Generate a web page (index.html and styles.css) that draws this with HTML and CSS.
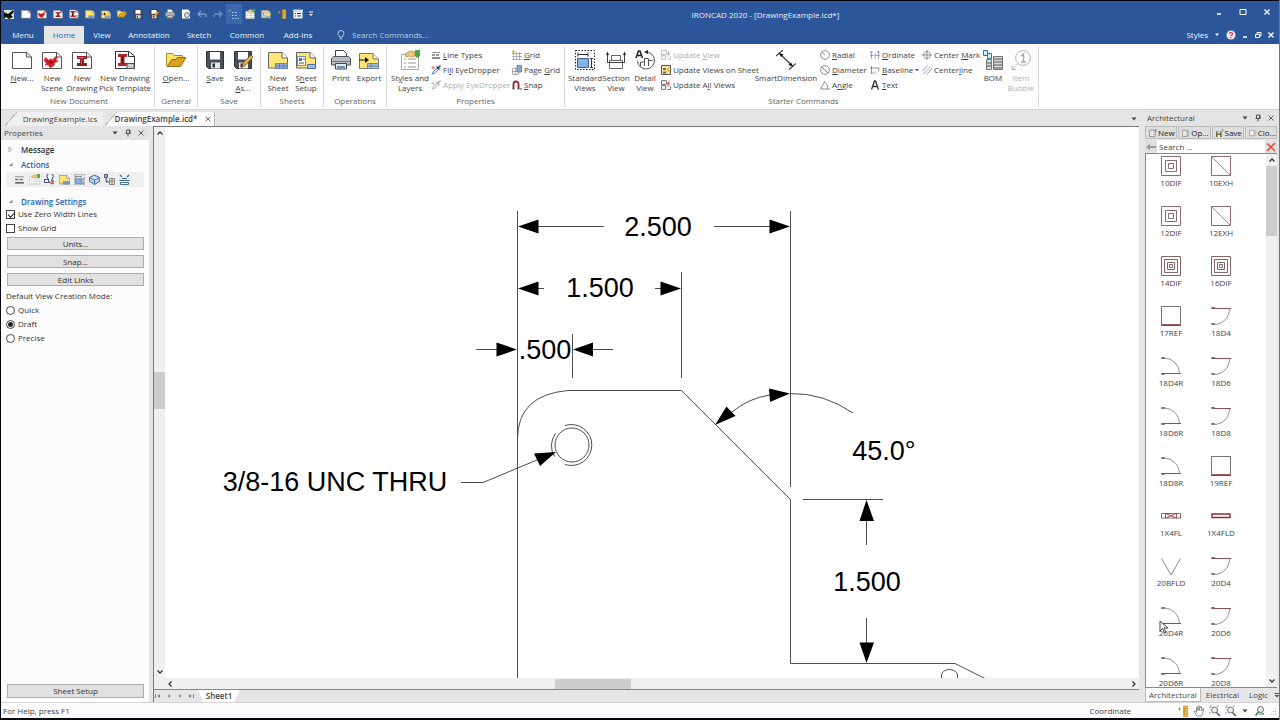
FILE: index.html
```html
<!DOCTYPE html>
<html lang="en">
<head>
<meta charset="utf-8">
<title>IRONCAD 2020 - [DrawingExample.icd*]</title>
<link rel="stylesheet" href="styles.css">
</head>
<body>
<svg class="defs" aria-hidden="true">
  <defs>
    <symbol id="page" viewBox="0 0 20 20"><path d="M.5 2.500H15l4.500 4.500v11.500H.5z" fill="#fff" stroke="#555"/><path d="M14.500 2.500V7h5" fill="none" stroke="#555"/></symbol>
    <symbol id="scene" viewBox="0 0 20 20"><use href="#page"/><path d="M3 7l4 3 2-2 1 2 4-4 2 1-2 3 3 1-4 2-1 3-4 2-2-3-3 1 1-3-2-2z" fill="#d41f26"/><path d="M7 11l5 1-4 2z" fill="#7b1015"/></symbol>
    <symbol id="draw" viewBox="0 0 20 20"><use href="#page"/><path d="M5 6h10v3h-3v4h3v3H5v-3h3V9H5z" fill="#8f1d22"/><path d="M6 7h7v1H6zM9 8h1v6H9z" fill="#d8595c"/></symbol>
    <symbol id="drawpick" viewBox="0 0 20 20"><path d="M.5 1.500H14l5.500 4.500v12.500H.5z" fill="#fff" stroke="#333"/><path d="M13.500 1.500V6.500h6" fill="none" stroke="#333"/><path d="M3 4h9v3H9.500v6H12v3H3v-3h2.500V7H3z" fill="#b3262b"/><path d="M6.500 6h2v8h-2z" fill="#6f1418"/><path d="M12 13.500h7v5h-7z" fill="#c9ccd0" stroke="#555"/></symbol>
    <symbol id="folder" viewBox="0 0 20 20"><path d="M.5 15.500V3.500h6l2 2h8v4" fill="#ffe16b" stroke="#a58b23"/><path d="M1 16.500L6 9.500h4l1.500-2H20L14.500 16.500z" fill="#d9a520" stroke="#8c6a14"/></symbol>
    <symbol id="floppy" viewBox="0 0 20 20"><path d="M1.500 1.500h17v17h-15l-2-2z" fill="#4b4f57" stroke="#30343b"/><path d="M5 2h10v7.500H5z" fill="#fff"/><path d="M6 12.500h9v6H6z" fill="#e6e8ec"/><path d="M7.500 13.500h2.500v4H7.500z" fill="#30343b"/></symbol>
    <symbol id="saveas" viewBox="0 0 20 20"><use href="#floppy"/><path d="M9 17l1.200-4L18 5l2 2-8 8.500z" fill="#f2b84b" stroke="#7a5a1b"/></symbol>
    <symbol id="sheet" viewBox="0 0 20 20"><path d="M.5 2.500H14L19.500 8v10H.5z" fill="#ffe574" stroke="#666"/><path d="M14 2.500V8h5.500" fill="#fff" stroke="#666"/><path d="M7.500 13.500h12v5h-12zM7.500 16h12M11.500 13.500v5M15.500 13.500v5" fill="#8fabd4" stroke="#5b79a8" stroke-width=".8"/></symbol>
    <symbol id="setup" viewBox="0 0 20 20"><path d="M.5 2.500H14L19.500 8v10H.5z" fill="#ffe574" stroke="#666"/><path d="M14 2.500V8h5.500" fill="#fff" stroke="#666"/><path d="M1.500 6.500h8v9h-8z" fill="#fff" stroke="#6b89b5"/><path d="M3 8h3v3H3z" fill="#3b74bd"/><path d="M3 13h5M7 9h2" stroke="#555"/><path d="M11.500 14.500h8v4h-8z" fill="#9dbce4" stroke="#4a70aa"/></symbol>
    <symbol id="print" viewBox="0 0 20 20"><path d="M4.500 7.500V.5h8l3 3v4" fill="#fff" stroke="#444"/><path d="M2.500 6.500h15l2 2v6.500H.5V8.500z" fill="#b9bcc2" stroke="#50545b"/><path d="M1 11.500h18" stroke="#777"/><path d="M4.500 13.500h11v5.500h-11z" fill="#e4edf7" stroke="#444"/><path d="M6 16h8v2H6z" fill="#6b8fb8"/></symbol>
    <symbol id="export" viewBox="0 0 20 20"><path d="M.5 3.500H14L19.500 9v9.500H.5z" fill="#ffe574" stroke="#777"/><path d="M14 3.500V9h5.500" fill="#fff2aa" stroke="#777"/><path d="M8.500 13.500h11v5h-11zM12 13.500v5M8.500 16h11" fill="#a9bdd6" stroke="#6f85a5"/><path d="M0 9.500h6V7l4 3-4 3v-2.500H0z" fill="#111"/></symbol>
    <symbol id="styles" viewBox="0 0 20 20"><path d="M1.500 4.500h17v15h-17z" fill="#fff" stroke="#aaa"/><path d="M4 9h2M8 9h8M4 13h2M8 13h8M4 17h2M8 17h8" stroke="#8c97a5"/><path d="M5 4l5-3 5 1v4l-4 1-2-1-3 1z" fill="#f0c877" stroke="#a7803a" stroke-width=".7"/><path d="M15 0h5v6l-3 2-2-2z" fill="#48a94b"/></symbol>
    <symbol id="lines" viewBox="0 0 10 10"><path d="M1 2.500h8" stroke="#999"/><path d="M1 5h8" stroke="#777" stroke-width="1.500" stroke-dasharray="3 1"/><path d="M1 8h8" stroke="#666" stroke-width="1.500"/></symbol>
    <symbol id="dropper" viewBox="0 0 10 10"><path d="M1 9l1-2 4-4 1.500 1.500-4 4z" fill="#dfeaf7" stroke="#3e6fae" stroke-width=".8"/><path d="M5 2l1-1 1 1 2-2 1 1-2 2 1 1-1 1z" fill="#27466f"/><path d="M0 2l3-1 1 2-2 2z" fill="#e28c77"/></symbol>
    <symbol id="droppergray" viewBox="0 0 10 10"><path d="M1 9l1-2 4-4 1.500 1.500-4 4z" fill="#eee" stroke="#aaa" stroke-width=".8"/><path d="M5 2l1-1 1 1 2-2 1 1-2 2 1 1-1 1zM0 3l3-1v3z" fill="#b5b5b5"/></symbol>
    <symbol id="grid" viewBox="0 0 10 10"><path d="M1.500 2v8M4.500 2v8M7.500 2v8M0 3.500h10M0 6.500h10M0 9.500h10" stroke="#a0a0a0" stroke-width=".8" fill="none"/><path d="M0 1l1.500-1L3 1.500 2 3 .5 3z" fill="#e2bb3b"/></symbol>
    <symbol id="pagegrid" viewBox="0 0 10 10"><path d="M.5 3.500h6v6h-6zM3.500 3v7M0 6.500h7" stroke="#999" stroke-width=".8" fill="none"/><path d="M5 .5h4.500v6.500H5z" fill="#8baad4" stroke="#53719d" stroke-width=".8"/></symbol>
    <symbol id="snap" viewBox="0 0 10 10"><path d="M1.500 8.500V4a2.500 2.500 0 0 1 5 0v4.500" fill="none" stroke="#8c2a33" stroke-width="1.800"/><path d="M.5 8h2v1.500h-2zM5.500 8h2v1.500h-2z" fill="#555"/><circle cx="9" cy="9" r=".8" fill="#333"/></symbol>
    <symbol id="stdview" viewBox="0 0 20 20"><path d="M.5.5h19v19H.5z" fill="none" stroke="#222" stroke-dasharray="1.500 1.500"/><path d="M2.500 8.500h11v9h-11z" fill="#86b1ea" stroke="#3d5f92"/><path d="M3 4.500h10M3 2.500v4M13 2.500v4M16.500 8.500v9M15 8.500h3M15 17.500h3" stroke="#333" fill="none"/></symbol>
    <symbol id="section" viewBox="0 0 20 20"><path d="M1.500 13V4.500M18.500 13V4.500M1.500 12.500h17" stroke="#444" fill="none"/><path d="M0 5l1.500-3.500L3 5zM17 5l1.500-3.500L20 5z" fill="#222"/><path d="M5.500 5.500h9v5h-9zM3.500 10.500h13v8h-13z" fill="#fff" stroke="#666"/><path d="M1.500 12.500h17" stroke="#444"/></symbol>
    <symbol id="detail" viewBox="0 0 20 20"><path d="M1 8L3.500 1H5L7.500 8M2.500 5.500h4" stroke="#222" stroke-width="1.500" fill="none"/><path d="M10.500 2a8.500 8.500 0 1 1-8 9" fill="none" stroke="#555"/><path d="M9 2l4-2v4z" fill="#222"/><path d="M5.500 16v-4h4v4M9.500 16V8.500h4V16M13.500 10.500h4" fill="none" stroke="#555"/></symbol>
    <symbol id="update" viewBox="0 0 10 10"><path d="M.5.5h5v4h-5zM.5 5.500h4v4h-4zM6 9.500h3.500V6" fill="#eee" stroke="#666" stroke-width=".8"/><path d="M9 0L5.500 4h2L5 8l4.500-4.500h-2z" fill="#d3392f"/></symbol>
    <symbol id="updategray" viewBox="0 0 10 10"><path d="M.5.5h5v4h-5zM.5 5.500h4v4h-4zM6 9.500h3.500V6" fill="#f5f5f5" stroke="#bbb" stroke-width=".8"/><path d="M9 0L5.500 4h2L5 8l4.500-4.500h-2z" fill="#aaa"/></symbol>
    <symbol id="updatesheet" viewBox="0 0 10 10"><path d="M.5.500h9v9h-9z" fill="#ffe89c" stroke="#555"/><path d="M2 3h3v2H2zM2 6.500h3v2H2z" fill="#666"/><path d="M9 1L5.500 5h2L5 9l4-4h-2z" fill="#c98500"/></symbol>
    <symbol id="smartdim" viewBox="0 0 20 20"><path d="M0 6L7 0M13 19.500L20 13.500M3.500 3.500l13 12.500" stroke="#444" stroke-width="1.200" fill="none"/><path d="M3 3l4.500 1.500L5 7zM17 16.500l-4.500-1.500 2.500-2.500z" fill="#111"/></symbol>
    <symbol id="radial" viewBox="0 0 10 10"><circle cx="5" cy="5" r="4.400" fill="none" stroke="#777" stroke-width=".8"/><path d="M5 5L1.500 2" stroke="#777" stroke-width=".8"/></symbol>
    <symbol id="diameter" viewBox="0 0 10 10"><circle cx="5" cy="5" r="4.400" fill="none" stroke="#777" stroke-width=".8"/><path d="M8 8L1.500 2" stroke="#555" stroke-width=".8"/></symbol>
    <symbol id="angle" viewBox="0 0 10 10"><path d="M10 9H.5L5 1M4.500 2.500Q8 4 8 9" fill="none" stroke="#777" stroke-width=".8"/></symbol>
    <symbol id="ordinate" viewBox="0 0 10 10"><path d="M1.500 1v8M0 5.500h4M5 3v6M8.500 1v8M5 5.500h5M0 2h3M7 2h3" fill="none" stroke="#7d93b5" stroke-width=".8"/></symbol>
    <symbol id="baseline" viewBox="0 0 10 10"><path d="M1.500 1v8M0 3h9.500M8.500 3v3M1.500 8h2M5 6.500v2" fill="none" stroke="#777" stroke-width=".8"/></symbol>
    <symbol id="texta" viewBox="0 0 10 10"><path d="M1.500 9.500L4.500 1h1L8.500 9.500M2.500 6.500h5" fill="none" stroke="#333" stroke-width="1.300"/></symbol>
    <symbol id="centermark" viewBox="0 0 10 10"><circle cx="5" cy="5" r="3.500" fill="none" stroke="#888" stroke-width=".8"/><path d="M5 0v10M0 5h10" stroke="#777" stroke-width=".8"/></symbol>
    <symbol id="centerline" viewBox="0 0 10 10"><path d="M.5 6L5.500.5M1 9.500l4-4M5 9.500L10 3" fill="none" stroke="#7f98b8" stroke-width=".9"/><path d="M5.500 5l3-3.500" stroke="#7f98b8" stroke-width=".9" stroke-dasharray="1.500 1"/></symbol>
    <symbol id="bom" viewBox="0 0 20 20"><path d="M.5.500h4v5h-4zM4.500 3.500h4v5h-4z" fill="#d3f0fa" stroke="#24798f"/><path d="M3.500 9.500h5v10h-5zM10.500 6.500h9v13h-9z" fill="#d5d9de" stroke="#777"/><path d="M11 9h8M11 12h8M11 15h8M11 18h8M4 13h4M4 16h4" stroke="#555"/></symbol>
    <symbol id="bubble" viewBox="0 0 20 20"><circle cx="12" cy="8" r="7.400" fill="none" stroke="#b4b4b4"/><path d="M10 6l2.500-2v8M10 12h5" fill="none" stroke="#aaa" stroke-width="1.400"/><path d="M7 13.500L1.500 19M1 15.500v4h4" fill="none" stroke="#b4b4b4"/></symbol>
    <symbol id="bulb" viewBox="0 0 10 10"><path d="M3.500 7C3.500 5.500 2 5 2 3.500a3 3 0 0 1 6 0C8 5 6.500 5.500 6.500 7zM3.700 8.800h2.600" fill="none" stroke="#c8d6ec" stroke-width=".9"/></symbol>
    <symbol id="down" viewBox="0 0 8 8"><path d="M1.500 2.500h5L4 5.500z" fill="#444"/></symbol>
    <symbol id="pin" viewBox="0 0 8 8"><path d="M2.500 1h3.500v3.500M1.500 4.500h5M4 4.500v3M2.500 1v3.500M5.500 1v3.500" fill="none" stroke="#444" stroke-width=".9"/></symbol>
    <symbol id="close" viewBox="0 0 8 8"><path d="M1.500 1.500l5 5M6.500 1.500l-5 5" stroke="#555" stroke-width=".9"/></symbol>
    <symbol id="chev" viewBox="0 0 8 8"><path d="M1.500 5.500L4 3l2.500 2.500" fill="none" stroke="#333" stroke-width="1.300"/></symbol>
    <symbol id="cube" viewBox="0 0 11 11"><path d="M.5 3.500l5-2.500 5 2.500v4l-5 3-5-3zM.5 3.500l5 2.500 5-2.500M5.500 6v4.500" fill="#b9d3f2" stroke="#3c659b" stroke-width=".9"/></symbol>
    <symbol id="stamp" viewBox="0 0 11 11"><path d="M4.500 5.500L3.500 4a3 3 0 1 1 5 0L7.500 7H10M.5 5.500h4v3h-4z" fill="#fff" stroke="#485b86" stroke-width="1.100"/><path d="M5 8l4 2M9 7v3" stroke="#c33" stroke-width="1.200"/></symbol>
    <symbol id="tree" viewBox="0 0 11 11"><path d="M.5.500h3v3h-3zM2 3.500V8h3" fill="#9fc0e6" stroke="#557"/><path d="M5.500 4.500h5v6h-5zM5.500 7h5M8 4.500v6" fill="#ddd" stroke="#777" stroke-width=".8"/></symbol>
    <symbol id="arrange" viewBox="0 0 11 11"><path d="M1 1l2 2M10 1L8 3" stroke="#356bb0" stroke-width="1.200"/><path d="M.5 6.500h10M1.500 8.500h8v2h-8zM3 4.500h5" fill="#fff" stroke="#456d96"/></symbol>
    <symbol id="ruler" viewBox="0 0 12 12"><path d="M6.500 1h4v10.500h-4z" fill="#f0b844" stroke="#c98b1c" stroke-width=".7"/><path d="M7 3.500h1.500M7 6h1.500M7 8.500h1.500" stroke="#7a5310" stroke-width=".7"/><path d="M1 4h3M2.500 2.500v3" stroke="#d28d24"/></symbol>
    <symbol id="hand" viewBox="0 0 12 12"><path d="M4 11L1 6.500l1-.5 1.500 1.500V2.500h1L5 5.500V1h1.200v4.500L7.500 1.500h1V6L10 3.500l.8.500L9.500 9 8.500 11z" fill="#fff" stroke="#777" stroke-width=".8"/></symbol>
    <symbol id="lens" viewBox="0 0 12 12"><path d="M1 1h2M1 1v2M10 1H8M1 9V7" stroke="#999" fill="none"/><circle cx="5.500" cy="5" r="3" fill="#e2effa" stroke="#777"/><path d="M7.500 7.500L11 11" stroke="#555" stroke-width="1.500"/></symbol>
    <symbol id="lensback" viewBox="0 0 12 12"><circle cx="7.500" cy="4.500" r="3" fill="#e2effa" stroke="#666"/><path d="M5.500 7L2.500 10.500" stroke="#3d8a46" stroke-width="1.800"/><path d="M6 9h5l-1.500-1.500" stroke="#3d8a46" fill="none"/></symbol>
    <symbol id="logo" viewBox="0 0 12 12"><path d="M1 2h10v9H1z" fill="#dfe6d8"/><path d="M1 4l4 2 5-4 1 2-3 3 2 2-4 2-3-2-2 2z" fill="#101510"/></symbol>
    <symbol id="undo" viewBox="0 0 10 10"><path d="M4 2L1 5l3 3M1 5h6q2 0 2 3" fill="none" stroke="#7f9dcd" stroke-width="1.300"/></symbol>
    <symbol id="redo" viewBox="0 0 10 10"><path d="M6 2l3 3-3 3M9 5H3Q1 5 1 8" fill="none" stroke="#6d8ec4" stroke-width="1.300"/></symbol>
    <symbol id="dots" viewBox="0 0 12 12"><path d="M4 4.500h1.500M7 4.500h1.500M4 7.500h1.500M7 7.500h1.500M4 10.500h1.500M7 10.500h1.500M10 10.500h1" stroke="#b9d2f3" stroke-width="1.200"/><path d="M1 3.500l2-2" stroke="#e6c84c"/></symbol>
    <symbol id="form" viewBox="0 0 10 10"><path d="M.5 1h9v8.500h-9z" fill="#f6f8fb"/><path d="M0 .5h10v2H0z" fill="#cfd9e8"/><path d="M2 4.500h1M4 4.500h4M2 7h1M4 7h4" stroke="#345"/></symbol>
    <symbol id="preview" viewBox="0 0 10 10"><path d="M1 .5h6l2 2v7H1z" fill="#fff"/><circle cx="6" cy="6" r="2.500" fill="#cfe0f4" stroke="#678"/></symbol>
    <symbol id="dif2" viewBox="0 0 20 20"><path d="M.5.500h19v19H.5zM4.500 4.500h11v11h-11zM7.500 7.500h5v5h-5z" fill="none" stroke="#8b6d6f"/></symbol>
    <symbol id="dif3" viewBox="0 0 20 20"><path d="M.5.500h19v19H.5zM3.500 3.500h13v13h-13zM6.500 6.500h7v7h-7zM8.500 8.500h3v3h-3z" fill="none" stroke="#876567"/></symbol>
    <symbol id="exh" viewBox="0 0 20 20"><path d="M.5.500h19v19H.5z" fill="none" stroke="#8b6d6f"/><path d="M.5.500l19 19" stroke="#777" stroke-width=".8"/></symbol>
    <symbol id="ref" viewBox="0 0 20 20"><path d="M.5.500h19v19H.5z" fill="none" stroke="#777"/><path d="M.5 19h19" stroke="#8a2f3a" stroke-width="1.600"/></symbol>
    <symbol id="door" viewBox="0 0 20 20"><path d="M.5 1.500h3v1h-3zM.5 17.500h3v1h-3z" fill="#fff" stroke="#844a50" stroke-width=".8"/><path d="M1 2.500h19" stroke="#8b5055"/><path d="M18.500 2.500A15.500 15.500 0 0 1 3 18.500" fill="none" stroke="#777" stroke-width=".8"/></symbol>
    <symbol id="doorr" viewBox="0 0 20 20"><path d="M.5 1.500h3v1h-3zM.5 17.500h3v1h-3z" fill="#fff" stroke="#844a50" stroke-width=".8"/><path d="M1 17.500h19" stroke="#8b5055"/><path d="M3 2A15.500 15.500 0 0 1 18.500 17.500" fill="none" stroke="#777" stroke-width=".8"/></symbol>
    <symbol id="fl" viewBox="0 0 20 20"><path d="M.5 7.500h19v4.500H.5zM4.500 7.500v4.500M15.500 7.500v4.500M4.500 7.500l11 4.500M15.500 7.500l-11 4.500" fill="none" stroke="#8d4a50" stroke-width=".9"/></symbol>
    <symbol id="fld" viewBox="0 0 20 20"><path d="M1 8h18v3.500H1z" fill="#fff" stroke="#8e2b37" stroke-width="1.400"/></symbol>
    <symbol id="bfld" viewBox="0 0 20 20"><path d="M.5 2.500L10 19 19.500 2.500" fill="none" stroke="#777" stroke-width=".9"/></symbol>
  </defs>
</svg>

<div class="app">
  <header class="titlebar">
    <div class="quick">
      <svg class="i12"><use href="#logo"/></svg>
      <button aria-label="New"><svg class="i10"><use href="#page"/></svg></button>
      <button aria-label="New scene"><svg class="i10"><use href="#scene"/></svg></button>
      <button aria-label="New drawing"><svg class="i10"><use href="#draw"/></svg></button>
      <button aria-label="Pick template"><svg class="i10"><use href="#drawpick"/></svg></button>
      <button aria-label="New sheet"><svg class="i10"><use href="#sheet"/></svg></button>
      <button aria-label="Export"><svg class="i10"><use href="#export"/></svg></button>
      <button aria-label="Open"><svg class="i10"><use href="#folder"/></svg></button>
      <button aria-label="Save"><svg class="i10"><use href="#floppy"/></svg></button>
      <button aria-label="Save as"><svg class="i10"><use href="#saveas"/></svg></button>
      <button aria-label="Print"><svg class="i10"><use href="#print"/></svg></button>
      <button aria-label="Print preview"><svg class="i10"><use href="#preview"/></svg></button>
      <button aria-label="Undo"><svg class="i10"><use href="#undo"/></svg></button>
      <button aria-label="Redo"><svg class="i10"><use href="#redo"/></svg></button>
      <button class="lit" aria-label="Snap points"><svg class="i12"><use href="#dots"/></svg></button>
      <button aria-label="Styles"><svg class="i10"><use href="#styles"/></svg></button>
      <button aria-label="Sheet setup"><svg class="i10"><use href="#setup"/></svg></button>
      <button aria-label="Ruler"><svg class="i10"><use href="#ruler"/></svg></button>
      <button aria-label="Options"><svg class="i10"><use href="#form"/></svg></button>
      <button class="tight" aria-label="Customize"><svg class="i8" viewBox="0 0 8 8"><path d="M2 2h4" stroke="#fff"/><path d="M2 4h4L4 6z" fill="#fff"/></svg></button>
    </div>
    <h1 class="title">IRONCAD 2020 - [DrawingExample.icd*]</h1>
    <div class="winbtns">
      <button aria-label="Minimize"><svg class="i8" viewBox="0 0 8 8"><path d="M2 6h4" stroke="#fff" stroke-width="1.500"/></svg></button>
      <button aria-label="Maximize"><svg class="i8" viewBox="0 0 8 8"><path d="M1 1.500h6v5H1z" fill="none" stroke="#fff"/></svg></button>
      <button aria-label="Close"><svg class="i8" viewBox="0 0 8 8"><path d="M1.500 1.500l5 5M6.500 1.500l-5 5" stroke="#fff" stroke-width="1.300"/></svg></button>
    </div>
  </header>

  <nav class="tabs">
    <button class="tab">Menu</button>
    <button class="tab active">Home</button>
    <button class="tab view">View</button>
    <button class="tab anno">Annotation</button>
    <button class="tab">Sketch</button>
    <button class="tab common">Common</button>
    <button class="tab addins">Add-Ins</button>
    <label class="cmdsearch"><svg class="i10"><use href="#bulb"/></svg><input type="text" placeholder="Search Commands..." aria-label="Search Commands"></label>
    <div class="tabright">
      <button>Styles</button>
      <svg class="i8" viewBox="0 0 8 8"><path d="M2 2.500h4L4 5z" fill="#fff"/></svg>
      <button aria-label="Help"><svg class="i10" viewBox="0 0 10 10"><circle cx="5" cy="5" r="4.500" fill="#f3e6ec"/><path d="M3.500 4Q3.500 2.500 5 2.500T6.500 4Q6.500 5 5 5.500V6M5 7v1.200" fill="none" stroke="#c8334a" stroke-width="1.200"/></svg></button>
      <button aria-label="Minimize document"><svg class="i8" viewBox="0 0 8 8"><path d="M2 6h4" stroke="#fff" stroke-width="1.500"/></svg></button>
      <button aria-label="Restore document"><svg class="i8" viewBox="0 0 8 8"><path d="M1.500 3.500h4v3h-4zM3 3V1.500h4v3.500H6" fill="none" stroke="#fff"/></svg></button>
      <button aria-label="Close document"><svg class="i8" viewBox="0 0 8 8"><path d="M1.500 1.500l5 5M6.500 1.500l-5 5" stroke="#fff" stroke-width="1.300"/></svg></button>
    </div>
  </nav>

  <section class="ribbon">
    <div class="group g-new">
      <div class="cmds">
        <button class="big w30"><svg class="i20"><use href="#page"/></svg><span><u>N</u>ew...</span></button>
        <button class="big w30"><svg class="i20"><use href="#scene"/></svg><span>New<br>Scene</span></button>
        <button class="big w30"><svg class="i20"><use href="#draw"/></svg><span>New<br>Drawing</span></button>
        <button class="big w56"><svg class="i20"><use href="#drawpick"/></svg><span>New Drawing<br>Pick Template</span></button>
      </div>
      <div class="gname">New Document</div>
    </div>
    <div class="group g-gen">
      <div class="cmds"><button class="big w30"><svg class="i20"><use href="#folder"/></svg><span><u>O</u>pen...</span></button></div>
      <div class="gname">General</div>
    </div>
    <div class="group g-pair">
      <div class="cmds">
        <button class="big w28"><svg class="i20"><use href="#floppy"/></svg><span><u>S</u>ave</span></button>
        <button class="big w28"><svg class="i20"><use href="#saveas"/></svg><span>Save<br><u>A</u>s...</span></button>
      </div>
      <div class="gname">Save</div>
    </div>
    <div class="group g-pair">
      <div class="cmds">
        <button class="big w28"><svg class="i20"><use href="#sheet"/></svg><span>New<br>Sheet</span></button>
        <button class="big w28"><svg class="i20"><use href="#setup"/></svg><span>S<u>h</u>eet<br>Setup</span></button>
      </div>
      <div class="gname">Sheets</div>
    </div>
    <div class="group g-pair">
      <div class="cmds">
        <button class="big w28"><svg class="i20"><use href="#print"/></svg><span>Print</span></button>
        <button class="big w28"><svg class="i20"><use href="#export"/></svg><span>Export</span></button>
      </div>
      <div class="gname">Operations</div>
    </div>
    <div class="group g-prop">
      <div class="cmds">
        <button class="big w40"><svg class="i20"><use href="#styles"/></svg><span>St<u>y</u>les and<br>Layers</span></button>
        <div class="col c80">
          <button class="small"><svg class="i10"><use href="#lines"/></svg><span><u>L</u>ine Types</span></button>
          <button class="small"><svg class="i10"><use href="#dropper"/></svg><span>Fi<u>l</u>l EyeDropper</span></button>
          <button class="small" disabled><svg class="i10"><use href="#droppergray"/></svg><span>Apply EyeDropper</span></button>
        </div>
        <div class="col c50">
          <button class="small"><svg class="i10"><use href="#grid"/></svg><span><u>G</u>rid</span></button>
          <button class="small"><svg class="i10"><use href="#pagegrid"/></svg><span>Page <u>G</u>rid</span></button>
          <button class="small"><svg class="i10"><use href="#snap"/></svg><span><u>S</u>nap</span></button>
        </div>
      </div>
      <div class="gname">Properties</div>
    </div>
    <div class="group g-start">
      <div class="cmds">
        <button class="big w32"><svg class="i20"><use href="#stdview"/></svg><span>Standard<br>Views</span></button>
        <button class="big w30"><svg class="i20"><use href="#section"/></svg><span>Section<br>View</span></button>
        <button class="big w28"><svg class="i20"><use href="#detail"/></svg><span>Detail<br>View</span></button>
        <div class="col c96">
          <button class="small" disabled><svg class="i10"><use href="#updategray"/></svg><span>Update <u>V</u>iew</span></button>
          <button class="small"><svg class="i10"><use href="#updatesheet"/></svg><span>Update Views on Sheet</span></button>
          <button class="small"><svg class="i10"><use href="#update"/></svg><span>Update A<u>l</u>l Views</span></button>
        </div>
        <button class="big w60"><svg class="i20"><use href="#smartdim"/></svg><span>SmartDimension</span></button>
        <div class="col c54">
          <button class="small"><svg class="i10"><use href="#radial"/></svg><span><u>R</u>adial</span></button>
          <button class="small"><svg class="i10"><use href="#diameter"/></svg><span><u>D</u>iameter</span></button>
          <button class="small"><svg class="i10"><use href="#angle"/></svg><span>A<u>n</u>gle</span></button>
        </div>
        <div class="col c52">
          <button class="small"><svg class="i10"><use href="#ordinate"/></svg><span><u>O</u>rdinate</span></button>
          <button class="small"><svg class="i10"><use href="#baseline"/></svg><span><u>B</u>aseline</span><svg class="i4" viewBox="0 0 4 4"><path d="M0 1h4L2 3z" fill="#444"/></svg></button>
          <button class="small"><svg class="i10"><use href="#texta"/></svg><span><u>T</u>ext</span></button>
        </div>
        <div class="col c57">
          <button class="small"><svg class="i10"><use href="#centermark"/></svg><span>Center <u>M</u>ark</span></button>
          <button class="small"><svg class="i10"><use href="#centerline"/></svg><span>Center<u>l</u>ine</span></button>
        </div>
        <button class="big w28"><svg class="i20"><use href="#bom"/></svg><span>BOM</span></button>
        <button class="big w28" disabled><svg class="i20"><use href="#bubble"/></svg><span>Item<br>Bubble</span></button>
      </div>
      <div class="gname">Starter Commands</div>
    </div>
  </section>

  <main class="work">
    <div class="docs">
      <div class="doctabs">
        <button class="doctab first">DrawingExample.ics</button>
        <button class="doctab current">DrawingExample.icd*<svg class="i8"><use href="#close"/></svg></button>
        <svg class="i8 more"><use href="#down"/></svg>
      </div>
      <div class="docrow">
        <aside class="props">
          <div class="panelhead"><span>Properties</span><svg class="i8"><use href="#down"/></svg><svg class="i8"><use href="#pin"/></svg><svg class="i8"><use href="#close"/></svg></div>
          <div class="propbody">
            <h2 class="sect dark"><svg class="i8" viewBox="0 0 8 8"><path d="M2 1l3 2.500L2 6z" fill="none" stroke="#999" stroke-width=".8"/></svg>Message</h2>
            <h2 class="sect"><svg class="i8" viewBox="0 0 8 8"><path d="M2 5h3.500V1.500z" fill="#888"/></svg>Actions</h2>
            <div class="actions">
              <button aria-label="Line types"><svg class="i11"><use href="#lines"/></svg></button>
              <button aria-label="Styles"><svg class="i11"><use href="#styles"/></svg></button>
              <button aria-label="Stamp"><svg class="i11"><use href="#stamp"/></svg></button>
              <button aria-label="Sheet"><svg class="i11"><use href="#sheet"/></svg></button>
              <button aria-label="Standard views"><svg class="i11"><use href="#stdview"/></svg></button>
              <button aria-label="3D view"><svg class="i11"><use href="#cube"/></svg></button>
              <button aria-label="Structure"><svg class="i11"><use href="#tree"/></svg></button>
              <button aria-label="Arrange"><svg class="i11"><use href="#arrange"/></svg></button>
            </div>
            <h2 class="sect settings"><svg class="i8" viewBox="0 0 8 8"><path d="M2 5h3.500V1.500z" fill="#888"/></svg>Drawing Settings</h2>
            <label class="opt"><input type="checkbox" checked>Use Zero Width Lines</label>
            <label class="opt"><input type="checkbox">Show Grid</label>
            <div class="btns">
              <button class="wide">Units...</button>
              <button class="wide">Snap...</button>
              <button class="wide">Edit Links</button>
            </div>
            <p class="mode">Default View Creation Mode:</p>
            <label class="opt"><input type="radio" name="mode">Quick</label>
            <label class="opt"><input type="radio" name="mode" checked>Draft</label>
            <label class="opt"><input type="radio" name="mode">Precise</label>
            <button class="wide bottom">Sheet Setup</button>
          </div>
        </aside>
        <section class="doc">
          <div class="viewrow">
            <div class="vscroll"><svg class="i8"><use href="#chev"/></svg><div class="vtrack"><div class="vthumb"></div></div><svg class="i8 flip"><use href="#chev"/></svg></div>
            <svg class="drawing" viewBox="165 127 974 552" preserveAspectRatio="xMinYMin slice" role="img" aria-label="Dimensioned part drawing">
              <g class="ink">
                <path d="M517.500 211V679M790.500 211V487M681.500 272V378M572.500 334V378"/>
                <path d="M538 226.500H604M714 226.500H770M538 288.500H544M655 288.500H661M476 349.500H497M592 349.500H613"/>
                <path d="M517.500 439Q517.500 395 568 390.500H681.500L790.500 499.500V663.500H955L986 679"/>
                <path d="M732 412Q749 398 770 395M790 393.500Q824 393 853 413"/>
                <path d="M803 499.500H883M866.500 520V545M866.500 618V643"/>
                <path d="M461 482.500H483L537 460"/>
                <circle cx="572" cy="445" r="17"/>
                <path d="M565 425.500A20.500 20.500 0 1 1 565 464.500M555.500 433.500A20.500 20.500 0 0 0 554.500 456.500"/>
                <path d="M941.500 679V675Q943 669.500 949.500 669.500T957.500 675V679"/>
              </g>
              <path d="M518 226.500L538.500 219.500V233.500zM790 226.500L769.500 219.500V233.500zM518 288.500L538.500 281.500V295.500zM681 288.500L660.500 281.500V295.500zM517 349.500L496.500 342.500V356.500zM573 349.500L593 342.500V356.500zM715 425L726.500 406.500 735.500 416zM790 393.500L769 388.500 770 402zM866.500 500L859.500 521H874zM866.500 663L859.500 642.500H874zM556 452L534 453.500 540 466z"/>
              <g class="dim">
                <text x="658" y="236">2.500</text>
                <text x="600" y="297">1.500</text>
                <text x="545" y="359">.500</text>
                <text x="884" y="460">45.0°</text>
                <text x="867" y="591">1.500</text>
                <text x="335" y="491">3/8-16 UNC THRU</text>
              </g>
            </svg>
          </div>
          <div class="hscroll"><svg class="i8 left"><use href="#chev"/></svg><div class="htrack"><div class="hthumb"></div></div><svg class="i8 right"><use href="#chev"/></svg></div>
          <div class="sheets">
            <button aria-label="First sheet"><svg class="i8" viewBox="0 0 8 8"><path d="M1.500 2v4" stroke="#888"/><path d="M6 2v4L3 4z" fill="#888"/></svg></button>
            <button aria-label="Previous sheet"><svg class="i8" viewBox="0 0 8 8"><path d="M5 2v4L2.500 4z" fill="#888"/></svg></button>
            <button aria-label="Next sheet"><svg class="i8" viewBox="0 0 8 8"><path d="M3 2v4L5.500 4z" fill="#888"/></svg></button>
            <button aria-label="Last sheet"><svg class="i8" viewBox="0 0 8 8"><path d="M2 2v4l3-2z" fill="#888"/><path d="M6.500 2v4" stroke="#888"/></svg></button>
            <button class="sheettab">Sheet1</button>
          </div>
        </section>
      </div>
    </div>

    <aside class="catalog">
      <div class="panelhead"><span>Architectural</span><svg class="i8"><use href="#down"/></svg><svg class="i8"><use href="#pin"/></svg><svg class="i8"><use href="#close"/></svg></div>
      <div class="cattools">
        <button><svg class="i8" viewBox="0 0 10 10"><path d="M.5 1.500h7v8h-7z" fill="#fff" stroke="#777"/><path d="M2 4h1M5 4h1M2 7h1M5 7h1" stroke="#555"/><path d="M8.500 0v4" stroke="#777"/></svg>New</button>
        <button><svg class="i8" viewBox="0 0 10 10"><path d="M.5 1.500h6v8h-6z" fill="#e8ebe0" stroke="#888"/><path d="M8.500 2v7M6 9h3" stroke="#aaa"/></svg>Op...</button>
        <button><svg class="i8" viewBox="0 0 10 10"><path d="M0 3h7v7H0z" fill="#6c6c4a"/><path d="M2 3h3v2.500H2zM2 7.500h3V10H2z" fill="#f0f0e0"/><path d="M8.500 0v3" stroke="#555"/></svg>Save</button>
        <button><svg class="i8" viewBox="0 0 10 10"><path d="M.5 1.500h6v7h-6z" fill="#eee" stroke="#999"/><path d="M8.500 1v8" stroke="#998" stroke-dasharray="2 1"/></svg>Clo...</button>
      </div>
      <div class="catsearch">
        <button aria-label="Back"><svg class="i10" viewBox="0 0 10 10"><path d="M0 5l4-3.500V4h6v2H4v2.500z" fill="#999"/></svg></button>
        <input type="text" placeholder="Search ..." aria-label="Search catalog">
        <button class="clear" aria-label="Clear search"><svg class="i10" viewBox="0 0 10 10"><path d="M1 1.500l8 7.500M9 1L1 9" stroke="#e0533a" stroke-width="1.600"/></svg></button>
      </div>
      <div class="catbody">
        <div class="items">
          <figure><svg class="i20"><use href="#dif2"/></svg><figcaption>10DIF</figcaption></figure>
          <figure><svg class="i20"><use href="#exh"/></svg><figcaption>10EXH</figcaption></figure>
          <figure><svg class="i20"><use href="#dif2"/></svg><figcaption>12DIF</figcaption></figure>
          <figure><svg class="i20"><use href="#exh"/></svg><figcaption>12EXH</figcaption></figure>
          <figure><svg class="i20"><use href="#dif3"/></svg><figcaption>14DIF</figcaption></figure>
          <figure><svg class="i20"><use href="#dif3"/></svg><figcaption>16DIF</figcaption></figure>
          <figure><svg class="i20"><use href="#ref"/></svg><figcaption>17REF</figcaption></figure>
          <figure><svg class="i20"><use href="#door"/></svg><figcaption>18D4</figcaption></figure>
          <figure><svg class="i20"><use href="#doorr"/></svg><figcaption>18D4R</figcaption></figure>
          <figure><svg class="i20"><use href="#door"/></svg><figcaption>18D6</figcaption></figure>
          <figure><svg class="i20"><use href="#doorr"/></svg><figcaption>18D6R</figcaption></figure>
          <figure><svg class="i20"><use href="#door"/></svg><figcaption>18D8</figcaption></figure>
          <figure><svg class="i20"><use href="#doorr"/></svg><figcaption>18D8R</figcaption></figure>
          <figure><svg class="i20"><use href="#ref"/></svg><figcaption>19REF</figcaption></figure>
          <figure><svg class="i20"><use href="#fl"/></svg><figcaption>1X4FL</figcaption></figure>
          <figure><svg class="i20"><use href="#fld"/></svg><figcaption>1X4FLD</figcaption></figure>
          <figure><svg class="i20"><use href="#bfld"/></svg><figcaption>20BFLD</figcaption></figure>
          <figure><svg class="i20"><use href="#door"/></svg><figcaption>20D4</figcaption></figure>
          <figure class="hovered"><svg class="i20"><use href="#doorr"/></svg><figcaption>20D4R</figcaption><svg class="cursor" viewBox="0 0 10 14"><path d="M1 1v10l2.500-2.500 2 4.500 1.500-.8-2-4.200H9z" fill="#fff" stroke="#445"/></svg></figure>
          <figure><svg class="i20"><use href="#door"/></svg><figcaption>20D6</figcaption></figure>
          <figure><svg class="i20"><use href="#doorr"/></svg><figcaption>20D6R</figcaption></figure>
          <figure><svg class="i20"><use href="#door"/></svg><figcaption>20D8</figcaption></figure>
        </div>
        <div class="vscroll cat"><svg class="i8"><use href="#chev"/></svg><div class="vtrack"><div class="vthumb"></div></div><svg class="i8 flip"><use href="#chev"/></svg></div>
      </div>
      <div class="cattabs">
        <button class="on">Architectural</button>
        <button>Electrical</button>
        <button>Logic</button>
        <svg class="i8" viewBox="0 0 8 8"><path d="M1.500 2.500h5" stroke="#555"/><path d="M1.500 4h5L4 6.500z" fill="#555"/></svg>
      </div>
    </aside>
  </main>

  <footer class="status">
    <span>For Help, press F1</span>
    <span class="coord">Coordinate</span>
    <div class="tools">
      <svg class="i12"><use href="#ruler"/></svg>
      <svg class="i12"><use href="#hand"/></svg>
      <svg class="i12"><use href="#lens"/></svg>
      <svg class="i12"><use href="#lens"/></svg>
      <svg class="i8"><use href="#down"/></svg>
      <svg class="i12"><use href="#lensback"/></svg>
      <svg class="i8" viewBox="0 0 8 8"><path d="M6 2h1M4 4.500h1M6 4.500h1M2 7h1M4 7h1M6 7h1" stroke="#aaa"/></svg>
    </div>
  </footer>
</div>
</body>
</html>
```
FILE: styles.css
```css
* { box-sizing: border-box; }

body {
  margin: 0;
  background: #04070f;
  color: #444;
  font: 8px/10px "Open Sans", "Noto Sans", sans-serif;
}

button, input {
  margin: 0;
  padding: 0;
  border: 0;
  background: none;
  color: inherit;
  font: inherit;
}

h1, h2, p, figure { margin: 0; }
svg { display: block; flex: none; }
.defs { position: absolute; width: 0; height: 0; }
.i4 { width: 4px; height: 4px; }
.i8 { width: 8px; height: 8px; }
.i10 { width: 10px; height: 10px; }
.i11 { width: 11px; height: 11px; }
.i12 { width: 12px; height: 12px; }
.i20 { width: 20px; height: 20px; }

.app {
  display: flex;
  flex-direction: column;
  height: 100vh;
  padding: 1px 0 2px 1px;
  border-right: 1px solid #4b7fae;
}

/* Title bar */
.titlebar {
  display: flex;
  align-items: center;
  height: 25px;
  background: #2b579a;
  color: #e8eef8;
}
.quick { display: flex; align-items: center; padding-left: 2px; }
.quick > svg { margin-right: 3px; }
.quick button {
  display: flex;
  justify-content: center;
  align-items: center;
  width: 16px;
  height: 20px;
}
.quick .lit { background: #3a68af; }
.quick .tight { width: 10px; }
.title { flex: 1; font-size: 8px; font-weight: 400; text-align: center; padding-top: 3px; }
.winbtns {
  display: flex;
  justify-content: flex-end;
  gap: 16px;
  padding: 0 8px 4px 0;
}

/* Ribbon tabs */
.tabs {
  display: flex;
  align-items: stretch;
  height: 18px;
  padding-left: 1px;
  background: #2b579a;
  color: #eef3fb;
}
.tab { width: 42px; }
.tab.active { width: 40px; background: #e6e6e6; color: #2a6ab5; }
.tab.view { width: 36px; }
.tab.anno { width: 58px; }
.tab.common { width: 54px; }
.tab.addins { width: 48px; }
.cmdsearch { display: flex; align-items: center; gap: 6px; margin-left: 14px; }
.cmdsearch input { width: 90px; }
.cmdsearch input::placeholder { color: #b9cbe8; opacity: 1; }
.tabright {
  display: flex;
  align-items: center;
  gap: 5px;
  margin-left: auto;
  padding-right: 4px;
}

/* Ribbon */
.ribbon {
  display: flex;
  height: 66px;
  padding: 2px 0 2px;
  border-bottom: 1px solid #d5d5d5;
  background: #fdfdfd;
}
.group {
  display: flex;
  flex-direction: column;
  justify-content: space-between;
  flex: none;
  padding: 4px 3px 1px;
  border-right: 1px solid #dadada;
}
.g-new { width: 154px; padding-left: 6px; }
.g-gen { width: 43px; }
.g-pair { width: 63px; }
.g-prop { width: 178px; }
.g-start { width: 474px; padding-left: 4px; padding-right: 0; }
.g-gen .cmds { justify-content: center; }
.cmds { display: flex; }
.gname { text-align: center; color: #666; }
.big {
  display: flex;
  flex-direction: column;
  align-items: center;
  gap: 3px;
  flex: none;
  white-space: nowrap;
}
.big span { text-align: center; }
.w28 { width: 28px; }
.w30 { width: 30px; }
.w32 { width: 32px; }
.w40 { width: 40px; }
.w56 { width: 56px; }
.w60 { width: 60px; }
.col { display: flex; flex-direction: column; flex: none; gap: 5px; }
.c50 { width: 50px; }
.c52 { width: 52px; }
.c54 { width: 54px; padding-left: 4px; }
.c57 { width: 57px; }
.c80 { width: 82px; padding-left: 1px; }
.c96 { width: 97px; padding-left: 2px; }
.small { display: flex; align-items: center; gap: 2px; height: 10px; white-space: nowrap; }
button:disabled { color: #b0b0b0; }
u { text-decoration-thickness: 1px; text-underline-offset: 1px; }

/* Workspace */
.work { display: flex; flex: 1; min-height: 0; background: #e6e6e6; }
.docs { display: flex; flex-direction: column; flex: 1; min-width: 0; }
.doctabs { display: flex; align-items: flex-end; height: 16px; padding-left: 2px; }
.doctab { display: flex; align-items: center; justify-content: center; height: 14px; }
.doctab.first {
  width: 100px;
  padding-left: 14px;
  background: linear-gradient(131deg, transparent 10px, #bbb 10px, #bbb 11px, #efefef 11px);
}
.doctab.current {
  gap: 7px;
  width: 112px;
  padding-left: 10px;
  border-right: 1px solid #bbb;
  background: linear-gradient(131deg, transparent 10px, #bbb 10px, #bbb 11px, #fff 11px);
  font-weight: 600;
}
.doctabs .more { margin: 0 3px 3px auto; }
.docrow { display: flex; flex: 1; min-height: 0; }

.panelhead {
  display: flex;
  align-items: center;
  gap: 5px;
  height: 14px;
  padding: 0 4px 0 3px;
  background: #e3e3e3;
}
.panelhead span { flex: 1; }

/* Properties */
.props { display: flex; flex-direction: column; width: 148px; background: #fcfcfc; }
.propbody { display: flex; flex-direction: column; flex: 1; padding: 2px 5px 4px; color: #333; }
.sect {
  display: flex;
  align-items: center;
  gap: 6px;
  height: 14px;
  padding-left: 1px;
  color: #1e62ad;
  font-size: 8px;
  font-weight: 600;
}
.sect.dark { height: 16px; color: #333; }
.sect.settings { height: 11px; margin-top: 9px; }
.actions { display: flex; gap: 4px; align-items: center; height: 15px; padding-left: 8px; background: #efefef; }
.actions button { display: flex; }
.opt { display: flex; align-items: center; gap: 3px; height: 14px; }
.opt input {
  appearance: none;
  flex: none;
  width: 9px;
  height: 9px;
  border: 1px solid #444;
  background: #fff;
}
.opt input[type="radio"] { border-radius: 50%; }
.opt input[type="radio"]:checked { background: radial-gradient(circle, #222 2px, #fff 3px); }
.opt input[type="checkbox"]:checked::before {
  content: "";
  display: block;
  width: 6px;
  height: 3px;
  border: solid #222;
  border-width: 0 0 1px 1px;
  transform: translate(1px, 1px) rotate(-45deg);
}
.btns { display: flex; flex-direction: column; gap: 5px; padding: 2px 0 5px; }
.wide { height: 13px; margin: 0 0 0 1px; border: 1px solid #adadad; background: #e1e1e1; }
.mode { height: 12px; }
.wide.bottom { margin-top: auto; height: 14px; }

/* Document */
.doc {
  display: flex;
  flex-direction: column;
  flex: 1;
  min-width: 0;
  margin: 0 2px 0 4px;
  border-left: 1px solid #777;
  border-top: 1px solid #777;
}
.viewrow { display: flex; flex: 1; min-height: 0; }
.vscroll {
  display: flex;
  flex-direction: column;
  align-items: center;
  width: 11px;
  padding: 2px 0;
  background: #f0f0f0;
}
.vtrack { flex: 1; width: 100%; padding-top: 235px; }
.vthumb { height: 37px; background: #cdcdcd; }
.flip { transform: rotate(180deg); }
.left { transform: rotate(-90deg); }
.right { transform: rotate(90deg); }
.drawing { flex: 1; min-width: 0; height: 100%; background: #fff; }
.ink { fill: none; stroke: #4d4d4d; stroke-width: 1; }
.dim { font: 27px "Liberation Sans", Arial, sans-serif; text-anchor: middle; fill: #000; }
.hscroll { display: flex; align-items: center; height: 11px; padding: 0 1px 0 12px; background: #f0f0f0; }
.htrack { flex: 1; padding-left: 381px; }
.hthumb { width: 76px; height: 10px; background: #cdcdcd; }
.sheets {
  display: flex;
  align-items: center;
  height: 13px;
  gap: 3px;
  border-top: 1px solid #888;
}
.sheettab {
  width: 42px;
  height: 12px;
  background: #fff;
  clip-path: polygon(0 0, 100% 0, 86% 100%, 14% 100%);
  font-weight: 600;
}

/* Catalog */
.catalog {
  display: flex;
  flex-direction: column;
  width: 138px;
  padding-left: 4px;
  border-right: 2px solid #e6e6e6;
}
.catalog .panelhead { height: 16px; padding: 0 2px; }
.cattools { display: grid; grid-template-columns: repeat(4, 1fr); gap: 1px; height: 14px; }
.cattools button {
  display: flex;
  align-items: center;
  gap: 1px;
  min-width: 0;
  padding-left: 3px;
  height: 13px;
  border: 1px solid #bbb;
  background: #dedede;
  color: #222;
  white-space: nowrap;
}
.catsearch { display: flex; height: 14px; background: #fff; border-bottom: 1px solid #888; }
.catsearch button { display: flex; align-items: center; justify-content: center; width: 12px; background: #e1e1e1; }
.catsearch input { flex: 1; min-width: 0; padding: 0 2px; }
.catsearch input::placeholder { color: #444; opacity: 1; }
.catbody {
  display: flex;
  flex: 1;
  min-height: 0;
  border-left: 1px solid #888;
  border-bottom: 1px solid #888;
  background: #fff;
}
.items {
  display: grid;
  grid-template-columns: repeat(auto-fill, 50px);
  grid-auto-rows: 50px;
  align-content: start;
  flex: 1;
  min-width: 0;
  padding-top: 2px;
  overflow: hidden;
}
figure { display: flex; flex-direction: column; align-items: center; gap: 3px; line-height: 8px; }
.hovered { position: relative; }
.cursor { position: absolute; left: 13px; top: 14px; width: 10px; height: 14px; }
.cat .vtrack { padding-top: 2px; }
.cat .vthumb { height: 70px; }
.cattabs { display: flex; align-items: flex-start; height: 14px; }
.cattabs button { padding: 0 5px; height: 14px; }
.cattabs .on { padding: 0 3px; background: #fff; border: 1px solid #bbb; border-top: 0; }
.cattabs svg { margin: 3px 0 0 auto; }

/* Status bar */
.status {
  display: flex;
  align-items: center;
  height: 16px;
  padding: 0 2px;
  border-top: 1px solid #d5d5d5;
  background: #fbfbfb;
}
.coord { margin-left: auto; margin-right: 46px; }
.tools { display: flex; align-items: center; gap: 4px; }
```
